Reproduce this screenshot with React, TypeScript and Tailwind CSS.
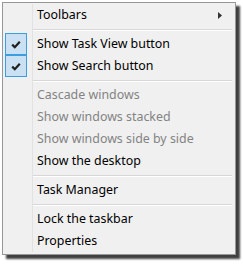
import React from "react";

type Item =
  | { kind: "item"; label: string; checked?: boolean; disabled?: boolean; submenu?: boolean }
  | { kind: "sep" };

const items: Item[] = [
  { kind: "item", label: "Toolbars", submenu: true },
  { kind: "sep" },
  { kind: "item", label: "Show Task View button", checked: true },
  { kind: "item", label: "Show Search button", checked: true },
  { kind: "sep" },
  { kind: "item", label: "Cascade windows", disabled: true },
  { kind: "item", label: "Show windows stacked", disabled: true },
  { kind: "item", label: "Show windows side by side", disabled: true },
  { kind: "item", label: "Show the desktop" },
  { kind: "sep" },
  { kind: "item", label: "Task Manager" },
  { kind: "sep" },
  { kind: "item", label: "Lock the taskbar" },
  { kind: "item", label: "Properties" },
];

function Check() {
  return (
    <svg width="10" height="9" viewBox="0 0 10 9">
      <path d="M1.2 4.6 L3.8 7.2 L8.8 1.8" fill="none" stroke="#1e1e1e" strokeWidth="2.2" />
    </svg>
  );
}

export default function App() {
  return (
    <div className="w-[243px] h-[264px] bg-white pt-[2px] pl-[2px]">
      <div
        className="w-[234px] border border-[#979797] bg-[#f0f0f0] pt-[1px] pb-[2px] shadow-[4px_4px_2px_rgba(0,0,0,0.75)]"
        style={{ fontFamily: '"Noto Sans", "Open Sans", sans-serif' }}
      >
        {items.map((it, i) =>
          it.kind === "sep" ? (
            <div key={i} className="flex h-[7px]">
              <div className="w-[29px] shrink-0" />
              <div className="flex-1 border-l border-[#e2e2e2] pr-[3px] pt-[3px]">
                <div className="h-px bg-[#d7d7d7]" />
                <div className="h-px bg-white" />
              </div>
            </div>
          ) : (
            <div key={i} className="flex h-[22px]">
              <div className="w-[29px] shrink-0 pl-[2px]">
                {it.checked && (
                  <div className="w-[22px] h-[22px] border border-[#3a9ee0] bg-[#c9e1f2] flex items-center justify-center">
                    <Check />
                  </div>
                )}
              </div>
              <div
                className={`flex-1 border-l border-[#e2e2e2] flex items-center pl-[4px] pr-[13px] text-[12.4px] leading-none ${
                  it.disabled ? "text-[#838383]" : "text-black"
                }`}
              >
                <span className="flex-1">{it.label}</span>
                {it.submenu && (
                  <svg width="4" height="7" viewBox="0 0 4 7">
                    <path d="M0 0 L4 3.5 L0 7 Z" fill="#333" />
                  </svg>
                )}
              </div>
            </div>
          )
        )}
      </div>
    </div>
  );
}
